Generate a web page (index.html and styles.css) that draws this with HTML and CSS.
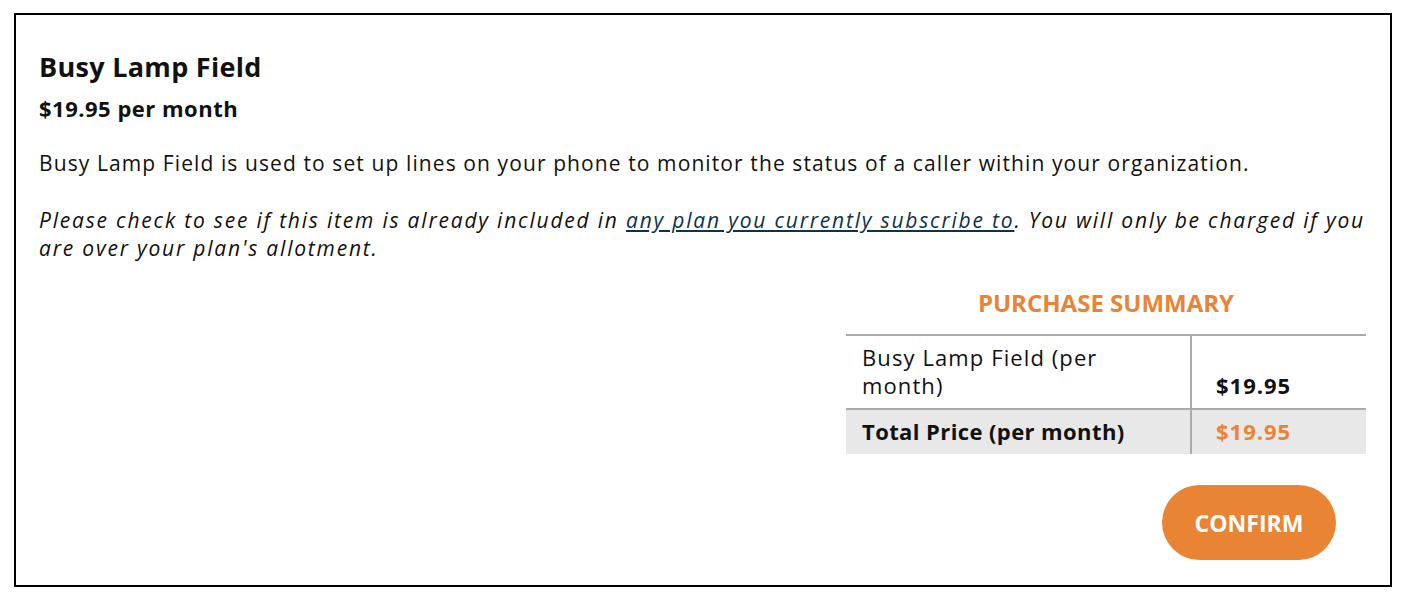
FILE: index.html
```html
<!DOCTYPE html>
<html lang="en">
<head>
    <meta charset="UTF-8">
    <meta name="viewport" content="width=device-width, initial-scale=1.0">
    <title>Busy Lamp Field</title>
    <link rel="stylesheet" href="styles.css">
</head>
<body>
    <div class="product-box">
        <h1 class="product-title">Busy Lamp Field</h1>
        <div class="product-price">$19.95 per month</div>
        <p class="product-desc">Busy Lamp Field is used to set up lines on your phone to monitor the status of a caller within your organization.</p>
        <p class="product-note">Please check to see if this item is already included in <a href="#">any plan you currently subscribe to</a>. You will only be charged if you are over your plan's allotment.</p>

        <div class="summary">
            <h2 class="summary-title">Purchase Summary</h2>
            <table class="summary-table">
                <tr>
                    <td class="item-name">Busy Lamp Field (per month)</td>
                    <td class="item-price">$19.95</td>
                </tr>
                <tr class="total-row">
                    <td class="item-name">Total Price (per month)</td>
                    <td class="item-price">$19.95</td>
                </tr>
            </table>
            <div class="confirm-container">
                <button class="confirm-button">Confirm</button>
            </div>
        </div>
    </div>
</body>
</html>
```

FILE: styles.css
```css
body {
    margin: 13px 14px;
    font-family: "Open Sans", Lato, sans-serif;
    color: #111;
    background-color: white;
}
.product-box {
    border: 2px solid black;
    padding: 36px 24px 24px 23px;
    height: 574px;
    box-sizing: border-box;
}
.product-title {
    font-size: 27px;
    font-weight: bold;
    margin: 0;
    line-height: 32px;
    letter-spacing: 0.3px;
}
.product-price {
    font-size: 22px;
    font-weight: bold;
    margin-top: 11px;
    line-height: 28px;
    letter-spacing: 0.5px;
}
.product-desc {
    font-size: 21px;
    margin: 27px 0 0 0;
    line-height: 28px;
    letter-spacing: 1.1px;
}
.product-note {
    font-size: 21px;
    font-style: italic;
    margin: 29px 0 0 0;
    line-height: 28px;
    letter-spacing: 1.8px;
}
.product-note a {
    color: #0d3349;
}
.summary {
    width: 520px;
    margin-left: auto;
    margin-top: 27px;
}
.summary-title {
    color: #e98434;
    font-size: 24px;
    font-weight: bold;
    text-transform: uppercase;
    text-align: center;
    margin: 0 0 17px 0;
    line-height: 28px;
}
.summary-table {
    width: 100%;
    border-collapse: collapse;
    font-size: 22px;
}
.summary-table td {
    border-top: 2px solid #aaa;
    vertical-align: bottom;
    line-height: 28px;
}
.summary-table .item-name {
    width: 345px;
    padding: 7px 30px 9px 16px;
    border-right: 2px solid #aaa;
    box-sizing: border-box;
    letter-spacing: 1.1px;
}
.summary-table .item-price {
    padding: 7px 24px 9px 24px;
    font-weight: bold;
    letter-spacing: 1px;
}
.total-row td {
    background-color: #e8e8e8;
    padding-top: 7px;
    padding-bottom: 7px;
}
.summary-table .total-row .item-name {
    font-weight: bold;
    letter-spacing: 0.4px;
}
.total-row .item-price {
    color: #e98434;
}
.confirm-container {
    display: flex;
    justify-content: flex-end;
    padding-right: 30px;
    margin-top: 31px;
}
.confirm-button {
    background-color: #e98434;
    color: white;
    border: none;
    border-radius: 38px;
    width: 174px;
    height: 75px;
    font-family: "Open Sans", Lato, sans-serif;
    font-size: 23px;
    font-weight: bold;
    text-transform: uppercase;
    cursor: pointer;
}
```
